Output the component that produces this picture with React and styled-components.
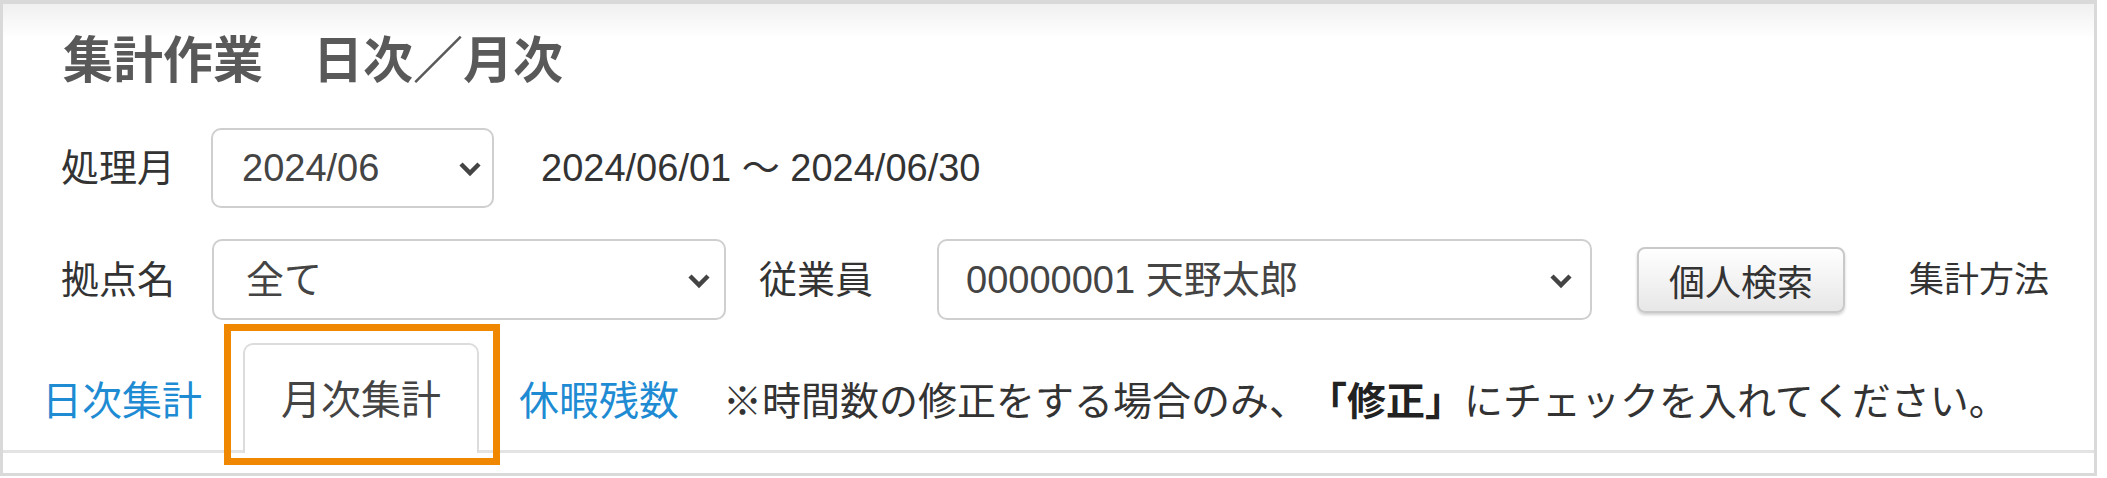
import React from "react";
import styled, { createGlobalStyle } from "styled-components";

const GlobalStyle = createGlobalStyle`
  html, body { margin: 0; padding: 0; background: #fff; }
  body { font-family: "Liberation Sans", "Noto Sans CJK JP", sans-serif; }
  * { box-sizing: border-box; }
`;

const Frame = styled.div`
  width: 2097px;
  border: 3px solid #d9d9d9;
  border-top-width: 4px;
  background: linear-gradient(#f0f0f0 0, #ffffff 34px);
  padding: 0 0 20px 0;
`;

const Title = styled.h1`
  margin: 0;
  padding: 22px 0 0 60px;
  font-family: "Noto Sans CJK JP", sans-serif;
  font-size: 50px;
  line-height: 60px;
  font-weight: 700;
  color: #595959;
`;

const Row = styled.div`
  display: flex;
  align-items: center;
  padding-left: 58px;
  margin-top: ${(p) => p.$mt}px;
`;

const Label = styled.span`
  font-size: ${(p) => p.$fs || 38}px;
  line-height: 1;
  color: #333;
  white-space: nowrap;
  margin-left: ${(p) => p.$ml || 0}px;
`;

const DateRange = styled.span`
  font-size: 38px;
  line-height: 1;
  color: #333;
  margin-left: 47px;
  white-space: nowrap;
`;

const SelectWrap = styled.div`
  position: relative;
  margin-left: ${(p) => p.$ml}px;
  width: ${(p) => p.$w}px;
  height: ${(p) => p.$h}px;
`;

const Select = styled.select`
  appearance: none;
  -webkit-appearance: none;
  width: 100%;
  height: 100%;
  border: 2px solid #cfcfcf;
  border-radius: 10px;
  background: #fff;
  padding: 0 50px 0 ${(p) => p.$pl || 28}px;
  font-family: "Liberation Sans", "Noto Sans CJK JP", sans-serif;
  font-size: 38px;
  color: #444;
  outline: none;
`;

const Chevron = styled.svg`
  position: absolute;
  right: ${(p) => p.$r || 14}px;
  top: 50%;
  width: 24px;
  height: 16px;
  margin-top: -7px;
  pointer-events: none;
`;

const Button = styled.button`
  margin-left: 45px;
  width: 208px;
  height: 66px;
  border: 2px solid #c9c9c9;
  border-radius: 8px;
  background: linear-gradient(#ffffff, #e7e7e7);
  box-shadow: 0 2px 3px rgba(0, 0, 0, 0.18);
  font-family: "Liberation Sans", "Noto Sans CJK JP", sans-serif;
  font-size: 36px;
  color: #333;
  padding: 0;
`;

const TabBar = styled.nav`
  display: flex;
  align-items: stretch;
  margin-top: 23px;
  padding-left: 39px;
  height: 110px;
  border-bottom: 3px solid #e3e3e3;
`;

const TabLink = styled.a`
  display: flex;
  align-items: center;
  padding-top: 2px;
  margin-left: ${(p) => p.$ml || 0}px;
  font-size: 40px;
  color: #1e8bd3;
  text-decoration: none;
  white-space: nowrap;
`;

const ActiveTab = styled.div`
  position: relative;
  display: flex;
  align-items: center;
  margin: 0 0 -3px 41px;
  padding: 0 36px 4px;
  border: 2px solid #dcdcdc;
  border-bottom: none;
  border-radius: 10px 10px 0 0;
  background: #fff;
  font-size: 40px;
  color: #444;
  white-space: nowrap;
`;

const Highlight = styled.span`
  position: absolute;
  left: -21px;
  top: -21px;
  right: -23px;
  bottom: -12px;
  border: 7px solid #ef8700;
  pointer-events: none;
`;

const Notice = styled.p`
  display: flex;
  align-items: center;
  padding-top: 2px;
  margin: 0 0 0 44px;
  font-size: 39px;
  color: #333;
  white-space: nowrap;
`;

const Strong = styled.b`
  font-weight: 700;
  color: #222;
`;

const ChevronIcon = ({ r }) => (
  <Chevron $r={r} viewBox="0 0 24 16">
    <path d="M3 3 L12 12 L21 3" fill="none" stroke="#444" strokeWidth="4.5" strokeLinejoin="miter" />
  </Chevron>
);

export default function App() {
  return (
    <>
      <GlobalStyle />
      <Frame>
        <Title>集計作業　日次／月次</Title>
        <Row $mt={42}>
          <Label>処理月</Label>
          <SelectWrap $ml={36} $w={283} $h={80}>
            <Select defaultValue="2024/06" $pl={29}>
              <option value="2024/06">2024/06</option>
            </Select>
            <ChevronIcon r={12} />
          </SelectWrap>
          <DateRange>2024/06/01 〜 2024/06/30</DateRange>
        </Row>
        <Row $mt={31}>
          <Label>拠点名</Label>
          <SelectWrap $ml={37} $w={514} $h={81}>
            <Select defaultValue="all" $pl={32}>
              <option value="all">全て</option>
            </Select>
            <ChevronIcon r={15} />
          </SelectWrap>
          <Label $ml={33}>従業員</Label>
          <SelectWrap $ml={64} $w={655} $h={81}>
            <Select defaultValue="1" $pl={27}>
              <option value="1">00000001 天野太郎</option>
            </Select>
            <ChevronIcon r={19} />
          </SelectWrap>
          <Button type="button">個人検索</Button>
          <Label $ml={64} $fs={35}>集計方法</Label>
        </Row>
        <TabBar>
          <TabLink href="#">日次集計</TabLink>
          <ActiveTab>
            月次集計
            <Highlight />
          </ActiveTab>
          <TabLink href="#" $ml={40}>休暇残数</TabLink>
          <Notice>
            ※時間数の修正をする場合のみ、<Strong>「修正」</Strong>にチェックを入れてください。
          </Notice>
        </TabBar>
      </Frame>
    </>
  );
}
